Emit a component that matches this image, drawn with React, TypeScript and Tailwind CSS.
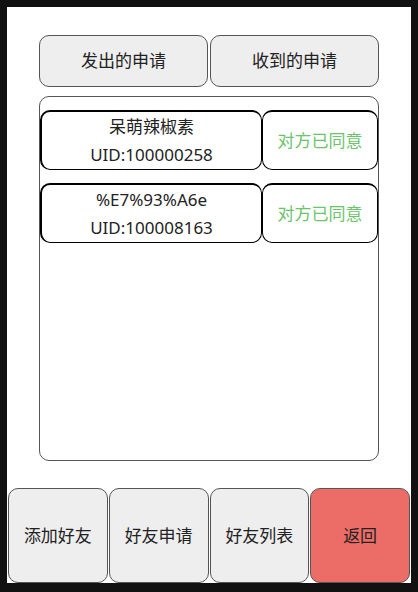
const font = { fontFamily: '"Noto Sans", "Noto Sans CJK SC", sans-serif' };

const requests = [
  { name: '呆萌辣椒素', uid: '100000258', status: '对方已同意' },
  { name: '%E7%93%A6e', uid: '100008163', status: '对方已同意' },
];

function RequestItem({ name, uid, status }: { name: string; uid: string; status: string }) {
  return (
    <div className="flex h-[60px]">
      <div className="w-[222px] flex flex-col items-center justify-center rounded-[10px] border border-black border-t-2 border-l-2 bg-white text-[17px] leading-[28px] text-[#222]">
        <span>{name}</span>
        <span>UID:{uid}</span>
      </div>
      <div className="flex-1 flex items-center justify-center rounded-[10px] border border-black border-t-2 bg-white text-[17px] text-[#6cc46c]">
        {status}
      </div>
    </div>
  );
}

export default function App() {
  return (
    <div className="w-[418px] h-[592px] bg-[#111] pt-[7px] px-[7px] pb-[9px]" style={font}>
      <div className="h-full bg-white flex flex-col">
        <div className="flex gap-[2px] mt-[28px] mx-[32px]">
          <button className="flex-1 h-[52px] rounded-[10px] border border-[#555] bg-[#eee] text-[17px] text-[#222]">
            发出的申请
          </button>
          <button className="flex-1 h-[52px] rounded-[10px] border border-[#555] bg-[#eee] text-[17px] text-[#222]">
            收到的申请
          </button>
        </div>
        <div className="mt-[9px] mx-[32px] h-[365px] rounded-[10px] border border-[#555] pt-[13px] flex flex-col gap-[13px]">
          {requests.map((r) => (
            <RequestItem key={r.uid} {...r} />
          ))}
        </div>
        <div className="mt-auto flex gap-[1px] pl-[1px] pr-[1px] h-[95px]">
          <button className="flex-1 rounded-[10px] border border-[#555] bg-[#eee] text-[17px] text-[#222]">添加好友</button>
          <button className="flex-1 rounded-[10px] border border-[#555] bg-[#eee] text-[17px] text-[#222]">好友申请</button>
          <button className="flex-1 rounded-[10px] border border-[#555] bg-[#eee] text-[17px] text-[#222]">好友列表</button>
          <button className="flex-1 rounded-[10px] border border-[#555] bg-[#ec6d67] text-[17px] text-[#222]">返回</button>
        </div>
      </div>
    </div>
  );
}
